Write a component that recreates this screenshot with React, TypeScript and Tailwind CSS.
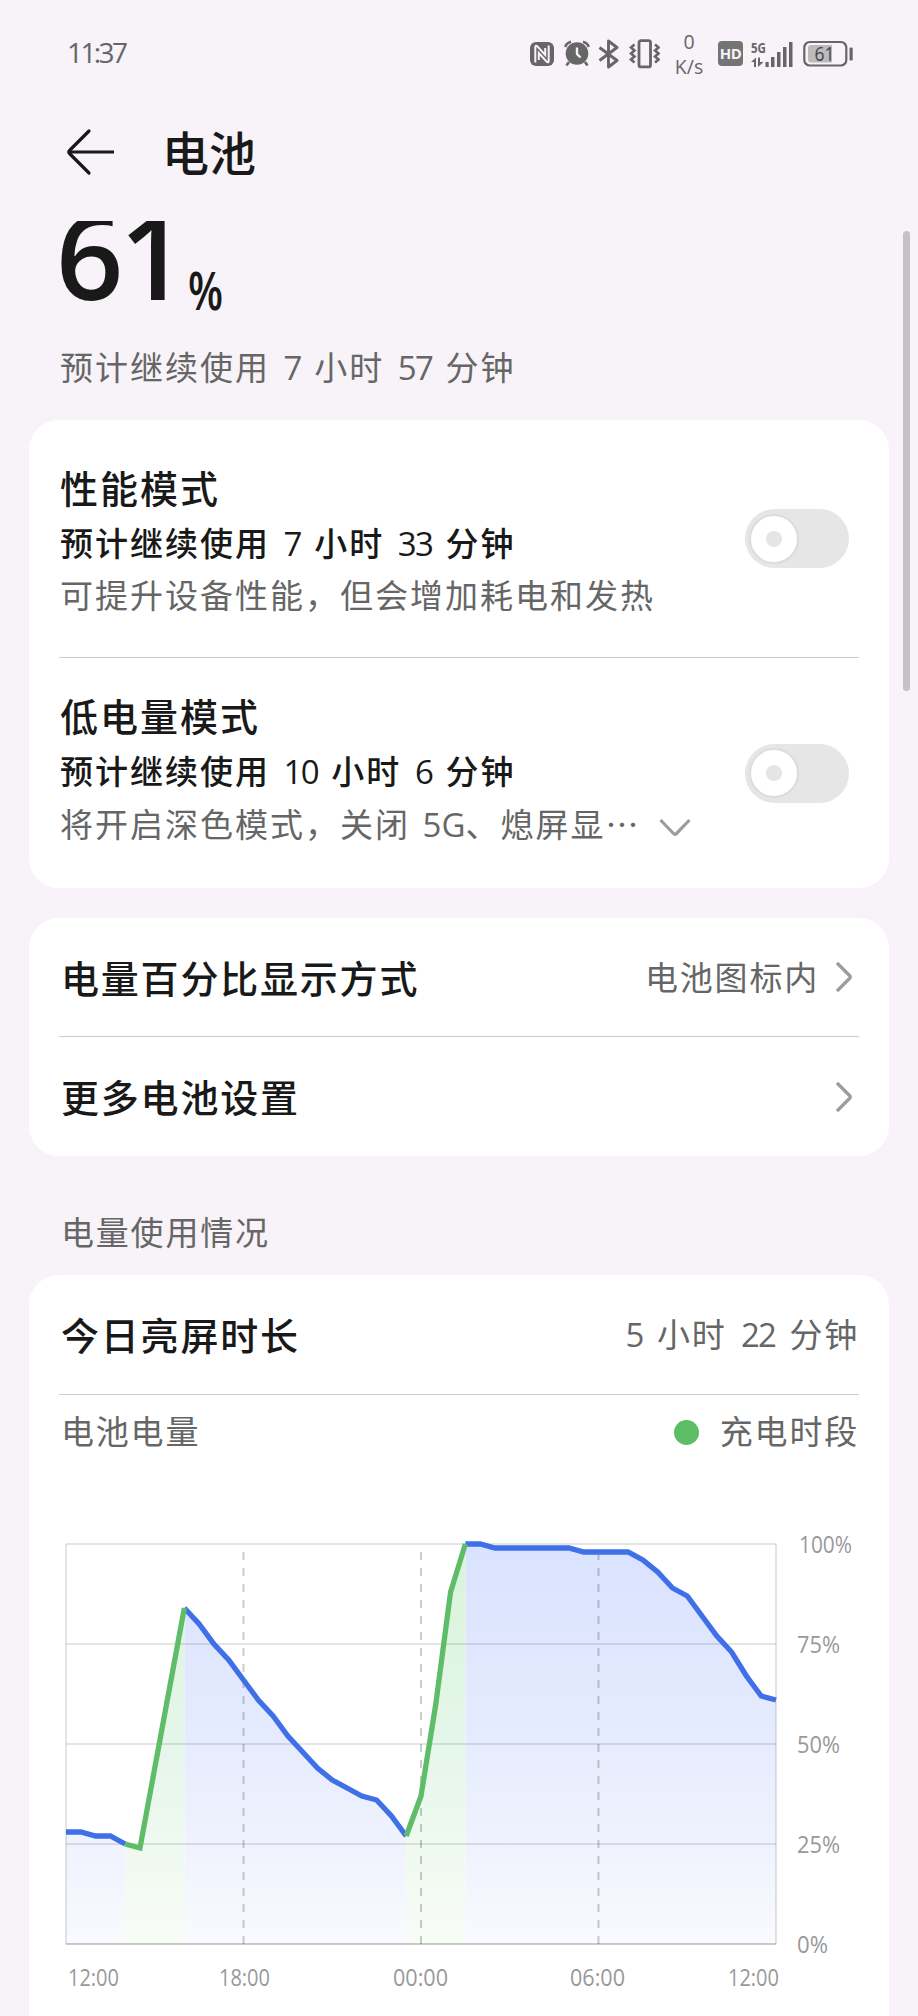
import type { ReactNode } from 'react';

// Battery level sampled every 30 minutes, 12:00 -> 12:00
const LEVELS = [
  28, 28, 27, 27, 25, 24, 44, 64, 84, 80, 75, 71, 66, 61, 57, 52, 48, 44, 41, 39, 37, 36, 32, 27,
  37, 60, 88, 100, 100, 99, 99, 99, 99, 99, 99, 98, 98, 98, 98, 96, 93, 89, 87, 82, 77, 73, 67, 62, 61,
];

const SEGMENTS = [
  { from: 0, to: 4, charging: false },
  { from: 8, to: 23, charging: false },
  { from: 27, to: 48, charging: false },
  { from: 4, to: 8, charging: true },
  { from: 23, to: 27, charging: true },
];

const CHART_LEFT = 37;
const CHART_TOP = 75;
const CHART_WIDTH = 710;
const CHART_HEIGHT = 400;

const px = (i: number) => CHART_LEFT + (i * CHART_WIDTH) / (LEVELS.length - 1);
const py = (level: number) => CHART_TOP + ((100 - level) * CHART_HEIGHT) / 100;

const X_LABELS = [
  { text: '12:00', x: 39, width: 51 },
  { text: '18:00', x: 190, width: 51 },
  { text: '00:00', x: 364, width: 55 },
  { text: '06:00', x: 541, width: 55 },
  { text: '12:00', x: 699, width: 51 },
];

const Y_LABELS = [
  { level: 100, x: 770, width: 53 },
  { level: 75, x: 768, width: 43 },
  { level: 50, x: 768, width: 43 },
  { level: 25, x: 768, width: 43 },
  { level: 0, x: 768, width: 31 },
];

// Digits sit tighter than the ideographs around them
function Mixed({ text }: { text: string }) {
  return (
    <>
      {text.split(/([0-9A-Z]+|…)/).map((part, i) => {
        if (part === '…') return <span key={i} className="font-['Noto_Sans_CJK_SC',sans-serif]">{part}</span>;
        if (part === '5G') return <span key={i} className="font-medium tracking-normal">{part}</span>;
        return /^[0-9]+$/.test(part) ? (
          <span key={i} className="mx-[1px] font-medium tracking-[-1.8px]">{part}</span>
        ) : (
          part
        );
      })}
    </>
  );
}

function Card({ className, children }: { className: string; children: ReactNode }) {
  return <section className={`mx-[29px] bg-white px-[30px] ${className}`}>{children}</section>;
}

function Divider() {
  return <div className="h-px bg-[#cccccc]" />;
}

function Toggle() {
  return (
    <div className="mr-[10px] flex h-[59px] w-[104px] shrink-0 items-center rounded-full bg-[#e6e6e6] pl-1">
      <div className="flex h-[50px] w-[50px] items-center justify-center rounded-full border-2 border-[#dedbdf] bg-white">
        <div className="h-4 w-4 rounded-full bg-[#e5e5e5]" />
      </div>
    </div>
  );
}

function ChevronRight() {
  return (
    <svg width="18" height="32" viewBox="0 0 18 32" fill="none" stroke="#9c9c9c" strokeWidth="3.2" className="mr-[6px] ml-[16px]">
      <path d="M2 2 L14.5 14.5 Q16 16 14.5 17.5 L2 30" />
    </svg>
  );
}

function ModeItem({ title, estimate, desc, more, className, textClassName }: {
  title: string;
  estimate: string;
  desc: string;
  more?: boolean;
  className: string;
  textClassName: string;
}) {
  return (
    <div className={`flex items-center justify-between ${className}`}>
      <div className={`pl-[1px] text-[33px] tracking-[2px] whitespace-pre [word-spacing:2px] ${textClassName}`}>
        <h2 className="h-[54px] text-[38px] leading-[53px] font-medium text-[#191919]">{title}</h2>
        <p className="h-[56px] leading-[56px] font-medium text-[#191919]"><Mixed text={estimate} /></p>
        <p className="flex h-[48px] items-center leading-[48px] text-[#666666]">
          <span><Mixed text={desc} /></span>
          {more && (
            <svg width="32" height="20" viewBox="0 0 32 20" fill="none" stroke="#9c9c9c" strokeWidth="3.2" className="mt-[9px] ml-[19px]">
              <path d="M1.5 2 L14.5 15.5 Q16 17 17.5 15.5 L30.5 2" />
            </svg>
          )}
        </p>
      </div>
      <Toggle />
    </div>
  );
}

function StatusBar() {
  return (
    <div className="flex h-[107px] items-center justify-between pr-[65px] pl-[67px] text-[#666666]">
      <span className="pb-[3px] text-[28px] font-medium tracking-[-2.6px]">11:37</span>
      <div className="flex items-center">
        {/* NFC */}
        <svg width="24" height="26" viewBox="0 0 24 26">
          <rect x="0" y="1" width="24" height="24" rx="6" fill="#666666" />
          <path d="M5.3 21.5 V6.5 Q5.3 3.5 7.5 5.5 L15.2 14 V7" fill="none" stroke="#f7f3f8" strokeWidth="2" />
          <path d="M18.7 4.5 V19.5 Q18.7 22.5 16.5 20.5 L8.8 12 V19" fill="none" stroke="#f7f3f8" strokeWidth="2" />
        </svg>
        {/* Alarm */}
        <svg width="26" height="27" viewBox="0 0 26 27" fill="none" stroke="#666666" strokeWidth="2.6" className="ml-[10px]">
          <circle cx="13" cy="13.5" r="11.3" fill="#666666" stroke="none" />
          <path d="M1.2 7 Q2.5 3 7 1.8" />
          <path d="M24.8 7 Q23.5 3 19 1.8" />
          <path d="M5 22 L2.5 25.5 M21 22 L23.5 25.5" />
          <path d="M13 7.5 V14 L16.5 17.5" stroke="#f7f3f8" strokeWidth="2.4" />
        </svg>
        {/* Bluetooth */}
        <svg width="22" height="30" viewBox="0 0 22 30" fill="none" stroke="#666666" strokeWidth="2.9" strokeLinejoin="round" className="ml-[8px]">
          <path d="M1.5 8.5 L19 21.5 L10.5 28 V2 L19 8.5 L1.5 21.5" />
        </svg>
        {/* Vibrate */}
        <svg width="31" height="30" viewBox="0 0 31 30" fill="none" stroke="#666666" strokeWidth="2.6" className="ml-[9px]">
          <rect x="10" y="1.7" width="11.5" height="26.2" rx="2" strokeWidth="2.8" />
          <path d="M5.5 5.5 L2 8.5 L5.5 11.5 L2 14.5 L5.5 17.5 L2 20.5 L5.5 23.5" />
          <path d="M26 5.5 L29.5 8.5 L26 11.5 L29.5 14.5 L26 17.5 L29.5 20.5 L26 23.5" />
        </svg>
        <div className="ml-[14px] flex w-[30px] flex-col items-center text-[19.5px] leading-[25px]">
          <span>0</span>
          <span>K/s</span>
        </div>
        <div className="ml-[14px] flex h-[25px] w-[25px] items-center justify-center rounded-[4px] bg-[#747474] text-[15px] leading-none font-bold tracking-[-0.5px] text-[#f7f3f8]">
          HD
        </div>
        {/* 5G signal */}
        <svg width="42" height="28" viewBox="0 0 42 28" fill="#666666" className="ml-[8px]">
          <text x="0" y="13" fontSize="15" fontWeight="700" textLength="15" lengthAdjust="spacingAndGlyphs">5G</text>
          <path d="M0 22 L5 17.5 V27 H3 V22 Z M7 17.5 H9 V22 L12.5 22 L7 27 Z" />
          <rect x="14.5" y="22" width="3.2" height="5" />
          <rect x="20" y="17" width="3.5" height="10" />
          <rect x="26" y="12" width="3.5" height="15" />
          <rect x="32" y="7" width="3.5" height="20" />
          <rect x="38" y="2" width="3.5" height="25" />
        </svg>
        {/* Battery */}
        <svg width="50" height="27" viewBox="0 0 50 27" className="ml-[10px]">
          <rect x="1.3" y="2" width="42" height="23.5" rx="5.5" fill="none" stroke="#666666" strokeWidth="2.2" />
          <path d="M8 5 H29 V22.5 H8 Q5 22.5 5 19.5 V8 Q5 5 8 5 Z" fill="#bbbabc" />
          <rect x="46.5" y="7.5" width="3.2" height="13" rx="1.2" fill="#666666" />
          <text x="11.5" y="21" fontSize="20.5" fill="#444444" textLength="20" lengthAdjust="spacingAndGlyphs">61</text>
        </svg>
      </div>
    </div>
  );
}

function BatteryChart() {
  return (
    <svg width="860" height="547" viewBox="0 0 860 547" className="-mx-[30px] block">
      <defs>
        <linearGradient id="drain" gradientUnits="userSpaceOnUse" x1="0" y1={py(100)} x2="0" y2={py(0)}>
          <stop offset="0" stopColor="#d9e2ff" />
          <stop offset="0.5" stopColor="#e6ecfe" />
          <stop offset="1" stopColor="#f9fafe" />
        </linearGradient>
        <linearGradient id="charge" gradientUnits="userSpaceOnUse" x1="0" y1={py(100)} x2="0" y2={py(0)}>
          <stop offset="0" stopColor="#d8f4d9" />
          <stop offset="0.5" stopColor="#e5f6ea" />
          <stop offset="1" stopColor="#f8fcf6" />
        </linearGradient>
      </defs>

      {SEGMENTS.map(({ from, to, charging }) => {
        const line = LEVELS.slice(from, to + 1).map((l, i) => `${px(from + i)},${py(l)}`).join(' ');
        return (
          <polygon
            key={from}
            points={`${px(from)},${py(0)} ${line} ${px(to)},${py(0)}`}
            fill={charging ? 'url(#charge)' : 'url(#drain)'}
          />
        );
      })}

      {/* Grid */}
      <g stroke="#000000" strokeOpacity="0.1" strokeWidth="2">
        {[100, 75, 50, 25].map((l) => (
          <line key={l} x1={px(0)} x2={px(48)} y1={py(l)} y2={py(l)} />
        ))}
        <line x1={px(0)} x2={px(0)} y1={py(100)} y2={py(0)} />
        <line x1={px(48)} x2={px(48)} y1={py(100)} y2={py(0)} />
      </g>
      <g stroke="#000000" strokeOpacity="0.2" strokeWidth="2">
        <line x1={px(0)} x2={px(48)} y1={py(0)} y2={py(0)} />
        {[12, 24, 36].map((i) => (
          <line key={i} x1={px(i)} x2={px(i)} y1={py(98)} y2={py(0)} strokeDasharray="8 8" />
        ))}
      </g>

      {SEGMENTS.map(({ from, to, charging }) => (
        <polyline
          key={from}
          points={LEVELS.slice(from, to + 1).map((l, i) => `${px(from + i)},${py(l)}`).join(' ')}
          fill="none"
          stroke={charging ? '#5fbc69' : '#3f70e8'}
          strokeWidth="5.3"
        />
      ))}

      <g fontSize="24.5" fontWeight="500" fill="#999999">
        {Y_LABELS.map(({ level, x, width }) => (
          <text key={level} x={x} y={py(level) + 8.5} textLength={width} lengthAdjust="spacingAndGlyphs">
            {level}%
          </text>
        ))}
        {X_LABELS.map(({ text, x, width }) => (
          <text key={x} x={x} y="516.5" textLength={width} lengthAdjust="spacingAndGlyphs">
            {text}
          </text>
        ))}
      </g>
    </svg>
  );
}

export default function App() {
  return (
    <div lang="zh-CN" className="relative h-[2016px] w-[918px] overflow-hidden bg-[#f7f3f8] font-['Open_Sans','Noto_Sans_CJK_SC',sans-serif]">
      <StatusBar />

      {/* Title bar */}
      <header className="mb-[22px] flex h-[92px] items-center pl-[66px]">
        <svg width="50" height="50" viewBox="0 0 50 50" fill="none" stroke="#191919" strokeWidth="3.2" strokeLinecap="round" strokeLinejoin="round">
          <path d="M23 3 L4 22 Q1.5 24 4 26 L23 45" />
          <path d="M3 24 H48" strokeLinecap="butt" />
        </svg>
        <h1 className="ml-[46px] text-[47px] leading-[60px] font-medium text-[#191919]">电池</h1>
      </header>

      <main className="h-[1795px] overflow-hidden">
        <div className="flex h-[107px] items-end pl-[56px] text-[#191919]">
          <span className="mb-[5px] text-[118px] leading-[136px] font-semibold tracking-[-4px]">61</span>
          <span className="mb-[13px] ml-[5px] inline-block origin-left scale-x-[0.78] text-[52px] leading-[50px] font-semibold">%</span>
        </div>
        <p className="flex h-[80px] items-center pl-[60px] text-[33px] tracking-[2px] whitespace-pre text-[#666666] [word-spacing:2px]">
          <span><Mixed text="预计继续使用 7 小时 57 分钟" /></span>
        </p>

        <Card className="mt-3 h-[468px] rounded-[30px]">
          <ModeItem
            title="性能模式"
            estimate="预计继续使用 7 小时 33 分钟"
            desc="可提升设备性能，但会增加耗电和发热"
            className="h-[237px]"
            textClassName="pt-[4px]"
          />
          <Divider />
          <ModeItem
            title="低电量模式"
            estimate="预计继续使用 10 小时 6 分钟"
            desc="将开启深色模式，关闭 5G、熄屏显…"
            more
            className="h-[230px]"
            textClassName="pb-[9px]"
          />
        </Card>

        <Card className="mt-[30px] h-[238px] rounded-[30px]">
          <div className="flex h-[118px] items-center text-[#666666]">
            <span className="flex-1 pt-[2px] pl-[2px] text-[38px] font-medium tracking-[1.8px] text-[#191919]">电量百分比显示方式</span>
            <span className="pt-[2px] text-[33px] tracking-[1.8px]">电池图标内</span>
            <ChevronRight />
          </div>
          <Divider />
          <div className="flex h-[119px] items-center justify-between">
            <span className="pt-[2px] pl-[2px] text-[38px] font-medium tracking-[1.8px] text-[#191919]">更多电池设置</span>
            <ChevronRight />
          </div>
        </Card>

        <h3 className="flex h-[119px] items-center pt-[35px] pl-[61px] text-[33px] tracking-[1.8px] text-[#666666]">电量使用情况</h3>

        <Card className="h-[800px] rounded-t-[30px]">
          <div className="flex h-[119px] items-center justify-between">
            <span className="pt-[2px] pl-[2px] text-[38px] font-medium tracking-[1.8px] text-[#191919]">今日亮屏时长</span>
            <span className="text-[33px] tracking-[1.8px] whitespace-pre text-[#666666] [word-spacing:3px]">
              <Mixed text="5 小时 22 分钟" />
            </span>
          </div>
          <Divider />
          <div className="flex h-[74px] items-center text-[33px] tracking-[1.8px] text-[#666666]">
            <span className="flex-1 pl-[2px]">电池电量</span>
            <span className="mr-[21px] h-[25px] w-[25px] rounded-full bg-[#5bbd64]" />
            <span>充电时段</span>
          </div>
          <BatteryChart />
        </Card>
      </main>

      {/* Scrollbar */}
      <div className="absolute top-[231px] left-[903px] h-[460px] w-[7px] rounded-full bg-[#c4c2c6]" />
    </div>
  );
}
